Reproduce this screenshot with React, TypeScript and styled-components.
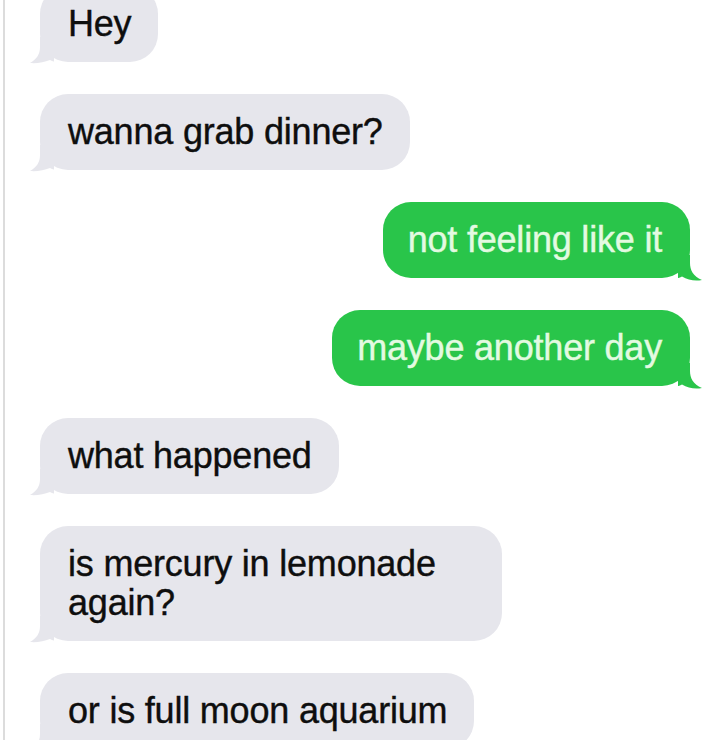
import React from "react";
import styled, { createGlobalStyle } from "styled-components";

const GlobalStyle = createGlobalStyle`
  html, body {
    margin: 0;
    padding: 0;
    background: #ffffff;
  }
  body {
    width: 720px;
    height: 740px;
    overflow: hidden;
    font-family: "Liberation Sans", Arial, Helvetica, sans-serif;
  }
`;

const Screen = styled.div`
  position: relative;
  width: 720px;
  height: 740px;
  overflow: hidden;
  background: #ffffff;
  box-sizing: border-box;
  padding-left: 3px;
`;

const EdgeLine = styled.div`
  display: flex;
  height: 100%;
  border-left: 2px solid #dcdcdc;
`;

const Thread = styled.div`
  flex: 1;
  display: flex;
  flex-direction: column;
  gap: 32px;
  margin-top: -14px;
  padding: 0 30px 0 35px;
`;

const Row = styled.div<{ $sent?: boolean }>`
  display: flex;
  justify-content: ${(p) => (p.$sent ? "flex-end" : "flex-start")};
`;

const Bubble = styled.div<{ $sent?: boolean }>`
  position: relative;
  max-width: 462px;
  box-sizing: border-box;
  padding: ${(p) => (p.$sent ? "18px 28px 19px 25px" : "18px 27px 19px 28px")};
  border-radius: 28px;
  background: ${(p) => (p.$sent ? "#29c54a" : "#e6e6ec")};
  color: ${(p) => (p.$sent ? "#e3fae1" : "#0e0e0e")};
  font-family: "Liberation Sans", Arial, Helvetica, sans-serif;
  font-size: 36px;
  line-height: 39px;
  letter-spacing: -0.2px;
  -webkit-text-stroke: 0.4px currentColor;
`;

const Tail = styled.svg<{ $sent?: boolean }>`
  position: absolute;
  bottom: ${(p) => (p.$sent ? "-3px" : "-1px")};
  ${(p) => (p.$sent ? "right: -12px;" : "left: -10px;")}
  width: 24px;
  height: 26px;
  overflow: visible;
`;

function SentTail() {
  return (
    <Tail $sent viewBox="0 0 24 26" aria-hidden>
      <path
        d="M0 0 L12 0 L12 8 C12 15 15 21 24 25 C17 26.5 10 25 4 21.5 C2 22.5 0 23 0 23 Z"
        fill="#29c54a"
      />
    </Tail>
  );
}

function ReceivedTail() {
  return (
    <Tail viewBox="0 0 24 26" aria-hidden>
      <path
        d="M24 0 L10 0 L10 10 C10 17 7 22 0 26 C7 26.5 14 25.5 20 23 C22 24 24 24.5 24 24.5 Z"
        fill="#e6e6ec"
      />
    </Tail>
  );
}

type Msg = { text: string; sent?: boolean };

const messages: Msg[] = [
  { text: "Hey" },
  { text: "wanna grab dinner?" },
  { text: "not feeling like it", sent: true },
  { text: "maybe another day", sent: true },
  { text: "what happened" },
  { text: "is mercury in lemonade again?" },
  { text: "or is full moon aquarium" },
];

export default function App() {
  return (
    <>
      <GlobalStyle />
      <Screen>
        <EdgeLine>
          <Thread>
            {messages.map((m, i) => (
              <Row key={i} $sent={m.sent}>
                <Bubble $sent={m.sent}>
                  {m.text}
                  {m.sent ? <SentTail /> : <ReceivedTail />}
                </Bubble>
              </Row>
            ))}
          </Thread>
        </EdgeLine>
      </Screen>
    </>
  );
}
